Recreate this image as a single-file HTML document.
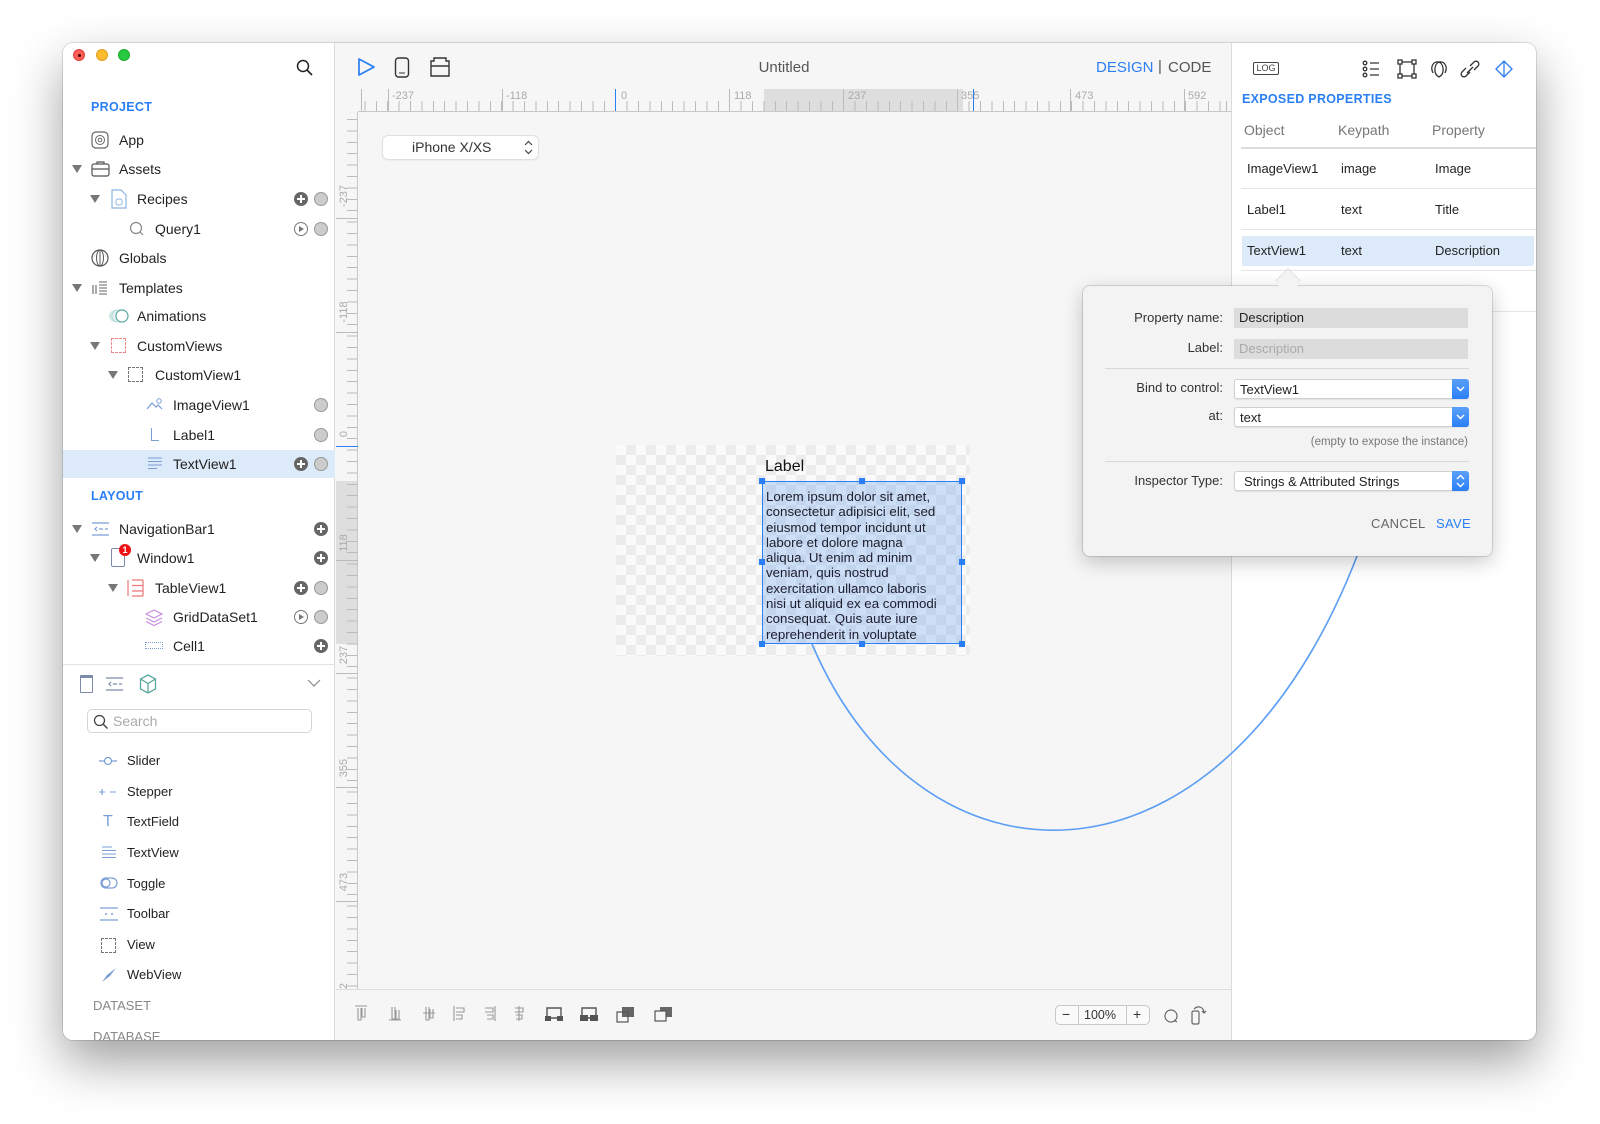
<!DOCTYPE html>
<html><head><meta charset="utf-8"><style>
*{margin:0;padding:0;box-sizing:border-box}
body{width:1600px;height:1124px;background:#fff;font-family:"Liberation Sans",sans-serif;position:relative;overflow:hidden;color:#222}
.win{position:absolute;left:63px;top:43px;width:1473px;height:997px;border-radius:10px;overflow:hidden;box-shadow:0 22px 50px rgba(0,0,0,.38),0 0 0 1px rgba(0,0,0,.12);background:#f6f6f6}
.in{position:absolute;left:-63px;top:-43px;width:1600px;height:1124px}
.a{position:absolute}
.t{position:absolute;font-size:14px;line-height:18px;white-space:nowrap;color:#222}
.sec{position:absolute;font-size:12.5px;font-weight:bold;color:#2a7ff6;letter-spacing:.3px}
.tri{position:absolute;width:0;height:0;border-left:5px solid transparent;border-right:5px solid transparent;border-top:8px solid #777}
.plus{position:absolute;width:14px;height:14px;border-radius:50%;background:#666}
.plus:before{content:"";position:absolute;left:3px;top:6px;width:8px;height:2px;background:#fff}
.plus:after{content:"";position:absolute;left:6px;top:3px;width:2px;height:8px;background:#fff}
.circ{position:absolute;width:14px;height:14px;border-radius:50%;background:#ccc;border:1.5px solid #999}
.play{position:absolute;width:14px;height:14px;border-radius:50%;border:1.3px solid #777}
.play:after{content:"";position:absolute;left:4px;top:2.5px;border-left:5px solid #777;border-top:3.5px solid transparent;border-bottom:3.5px solid transparent}
.w{position:absolute;font-size:13px;line-height:16px;color:#222}
.rl{position:absolute;font-size:11px;color:#aaa}
.mt{position:absolute;width:1px;background:#bbb}
.fl{position:absolute;font-size:13px;color:#333;text-align:right;width:140px}
.fld{position:absolute;height:20px;font-size:13px;line-height:20px;padding-left:5px}
.sel{background:#fff;border:1px solid #d0d0d0;border-radius:3px;box-shadow:0 1px 1px rgba(0,0,0,.08)}
.sb{position:absolute;right:-1px;top:-1px;width:17px;height:20px;background:linear-gradient(#5aa0fa,#2a7ff6);border-radius:0 3px 3px 0}
</style></head><body>
<div class="win"><div class="in">

<!-- sidebar -->
<div class="a" style="left:63px;top:43px;width:272px;height:997px;background:#fff;border-right:1px solid #dcdcdc"></div>
<div class="a" style="left:73px;top:49px;width:12px;height:12px;border-radius:50%;background:#fe5f57;border:1px solid #e0443e"></div>
<div class="a" style="left:78px;top:54px;width:3px;height:3px;border-radius:50%;background:#4d0000"></div>
<div class="a" style="left:96px;top:49px;width:12px;height:12px;border-radius:50%;background:#febc2e;border:1px solid #dea123"></div>
<div class="a" style="left:118px;top:49px;width:12px;height:12px;border-radius:50%;background:#28c840;border:1px solid #1aab29"></div>
<svg class="a" style="left:296px;top:59px" width="18" height="18"><circle cx="7" cy="7" r="5.5" fill="none" stroke="#222" stroke-width="1.5"/><line x1="11" y1="11" x2="16" y2="16" stroke="#222" stroke-width="1.6"/></svg>

<div class="sec" style="left:91px;top:100px">PROJECT</div>
<svg class="a" style="left:91px;top:131px" width="18" height="18"><rect x="1" y="1" width="16" height="16" rx="4" fill="none" stroke="#666" stroke-width="1.2"/><circle cx="9" cy="9" r="4.5" fill="none" stroke="#666"/><circle cx="9" cy="9" r="1.8" fill="none" stroke="#666"/></svg>
<div class="t" style="left:119px;top:131px">App</div>

<div class="tri" style="left:72px;top:165px"></div>
<svg class="a" style="left:91px;top:160px" width="19" height="18"><rect x="1" y="4" width="17" height="12" rx="2" fill="none" stroke="#555" stroke-width="1.2"/><path d="M6 4V2h7v2M1 9h17" fill="none" stroke="#555" stroke-width="1.2"/></svg>
<div class="t" style="left:119px;top:160px">Assets</div>

<div class="tri" style="left:90px;top:195px"></div>
<svg class="a" style="left:111px;top:189px" width="16" height="20"><path d="M1 1h9l5 5v13H1z" fill="none" stroke="#8db4e0" stroke-width="1.2"/><rect x="5" y="10" width="6" height="6" rx="2" fill="none" stroke="#8db4e0"/></svg>
<div class="t" style="left:137px;top:190px">Recipes</div>
<div class="plus" style="left:294px;top:192px"></div><div class="circ" style="left:314px;top:192px"></div>

<svg class="a" style="left:129px;top:221px" width="16" height="16"><circle cx="7" cy="7" r="5.5" fill="none" stroke="#888" stroke-width="1.2"/><line x1="11" y1="11" x2="14" y2="14" stroke="#888" stroke-width="1.2"/></svg>
<div class="t" style="left:155px;top:220px">Query1</div>
<div class="play" style="left:294px;top:222px"></div><div class="circ" style="left:314px;top:222px"></div>

<svg class="a" style="left:91px;top:249px" width="18" height="18"><circle cx="9" cy="9" r="8" fill="none" stroke="#555" stroke-width="1.2"/><ellipse cx="9" cy="9" rx="3.5" ry="8" fill="none" stroke="#555"/><line x1="9" y1="1" x2="9" y2="17" stroke="#555"/></svg>
<div class="t" style="left:119px;top:249px">Globals</div>

<div class="tri" style="left:72px;top:284px"></div>
<svg class="a" style="left:92px;top:281px" width="16" height="14"><path d="M1 4v9M4 4v9M7 1h8M7 4h8M7 7h8M7 10h8M7 13h8" stroke="#666" stroke-width="1.1"/></svg>
<div class="t" style="left:119px;top:279px">Templates</div>

<svg class="a" style="left:108px;top:308px" width="22" height="16"><circle cx="7" cy="8" r="6" fill="#cfe8e4"/><circle cx="10" cy="8" r="6" fill="#e2f1ef" stroke="#b5dbd5"/><circle cx="14" cy="8" r="6" fill="#fff" stroke="#5aaa9e" stroke-width="1.2"/></svg>
<div class="t" style="left:137px;top:307px">Animations</div>

<div class="tri" style="left:90px;top:342px"></div>
<div class="a" style="left:111px;top:338px;width:15px;height:15px;border:1.3px dashed #e88"></div>
<div class="t" style="left:137px;top:337px">CustomViews</div>

<div class="tri" style="left:108px;top:371px"></div>
<div class="a" style="left:128px;top:367px;width:15px;height:15px;border:1.3px dashed #777"></div>
<div class="t" style="left:155px;top:366px">CustomView1</div>

<svg class="a" style="left:146px;top:397px" width="18" height="14"><path d="M1 12l5-6 4 4 2-2 4 4" fill="none" stroke="#7a9fd6" stroke-width="1.2"/><circle cx="13" cy="4" r="2.2" fill="none" stroke="#7a9fd6"/></svg>
<div class="t" style="left:173px;top:396px">ImageView1</div>
<div class="circ" style="left:314px;top:398px"></div>

<div class="a" style="left:151px;top:428px;width:8px;height:13px;border-left:1.6px solid #7a9fd6;border-bottom:1.6px solid #7a9fd6"></div>
<div class="t" style="left:173px;top:426px">Label1</div>
<div class="circ" style="left:314px;top:428px"></div>

<div class="a" style="left:63px;top:450px;width:272px;height:28px;background:#dceaf9"></div>
<svg class="a" style="left:147px;top:457px" width="16" height="14"><path d="M1 1h14M1 4.5h14M1 8h14M1 11.5h9" stroke="#7a9fd6" stroke-width="1.1"/></svg>
<div class="t" style="left:173px;top:455px">TextView1</div>
<div class="plus" style="left:294px;top:457px"></div><div class="circ" style="left:314px;top:457px"></div>

<div class="sec" style="left:91px;top:489px">LAYOUT</div>

<div class="tri" style="left:72px;top:525px"></div>
<svg class="a" style="left:91px;top:522px" width="19" height="14"><path d="M1 1h17M1 13h17M8 7h4M14 7h3M6 5l-2 2 2 2" fill="none" stroke="#7a9fd6" stroke-width="1.2"/></svg>
<div class="t" style="left:119px;top:520px">NavigationBar1</div>
<div class="plus" style="left:314px;top:522px"></div>

<div class="tri" style="left:90px;top:554px"></div>
<div class="a" style="left:111px;top:548px;width:14px;height:19px;border:1.3px solid #7b8aa8;border-radius:2px"></div>
<div class="a" style="left:119px;top:544px;width:12px;height:12px;border-radius:50%;background:#e11;color:#fff;font-size:9px;font-weight:bold;text-align:center;line-height:12px">1</div>
<div class="t" style="left:137px;top:549px">Window1</div>
<div class="plus" style="left:314px;top:551px"></div>

<div class="tri" style="left:108px;top:584px"></div>
<svg class="a" style="left:127px;top:579px" width="17" height="18"><path d="M1 1v16M16 1v16M5 1h11M5 6.5h11M5 12h11M5 17h11" fill="none" stroke="#e77" stroke-width="1.2"/></svg>
<div class="t" style="left:155px;top:579px">TableView1</div>
<div class="plus" style="left:294px;top:581px"></div><div class="circ" style="left:314px;top:581px"></div>

<svg class="a" style="left:145px;top:609px" width="18" height="17"><path d="M9 1l8 4-8 4-8-4z M1 9l8 4 8-4 M1 12.5l8 4 8-4" fill="none" stroke="#c98be0" stroke-width="1.2"/></svg>
<div class="t" style="left:173px;top:608px">GridDataSet1</div>
<div class="play" style="left:294px;top:610px"></div><div class="circ" style="left:314px;top:610px"></div>

<div class="a" style="left:145px;top:642px;width:18px;height:7px;border:1.2px dotted #7a9fd6"></div>
<div class="t" style="left:173px;top:637px">Cell1</div>
<div class="plus" style="left:314px;top:639px"></div>

<div class="a" style="left:63px;top:664px;width:272px;height:1px;background:#e2e2e2"></div>
<div class="a" style="left:80px;top:675px;width:13px;height:18px;border:1.3px solid #7b8aa8;border-radius:1px;border-top-width:3px"></div>
<svg class="a" style="left:105px;top:677px" width="19" height="14"><path d="M1 1h17M1 13h17M8 7h4M14 7h3M6 5l-2 2 2 2" fill="none" stroke="#7b8aa8" stroke-width="1.2"/></svg>
<svg class="a" style="left:139px;top:674px" width="18" height="20"><path d="M9 1l7.5 4v10L9 19 1.5 15V5z M1.5 5L9 9.5l7.5-4.5 M9 9.5V19" fill="none" stroke="#5aaa9e" stroke-width="1.3"/></svg>
<svg class="a" style="left:307px;top:678px" width="14" height="10"><path d="M1 2l6 6 6-6" fill="none" stroke="#888" stroke-width="1.2"/></svg>

<div class="a" style="left:87px;top:709px;width:225px;height:24px;border:1px solid #d5d5d5;border-radius:5px;background:#fff"></div>
<svg class="a" style="left:93px;top:714px" width="16" height="16"><circle cx="6.5" cy="6.5" r="5" fill="none" stroke="#444" stroke-width="1.3"/><line x1="10" y1="10" x2="14.5" y2="14.5" stroke="#444" stroke-width="1.4"/></svg>
<div class="t" style="left:113px;top:712px;color:#aaa;font-size:14px">Search</div>

<svg class="a" style="left:98px;top:755px" width="20" height="12"><path d="M1 6h5M14 6h5" stroke="#7a9fd6" stroke-width="1.2"/><circle cx="10" cy="6" r="3.5" fill="none" stroke="#7a9fd6" stroke-width="1.2"/></svg>
<div class="w" style="left:127px;top:753px">Slider</div>
<svg class="a" style="left:98px;top:786px" width="20" height="12"><path d="M1 6h6M4 3v6M12 6h6" stroke="#7a9fd6" stroke-width="1.1"/></svg>
<div class="w" style="left:127px;top:784px">Stepper</div>
<div class="a" style="left:103px;top:813px;font-size:16px;color:#7a9fd6">T</div>
<div class="w" style="left:127px;top:814px">TextField</div>
<svg class="a" style="left:101px;top:846px" width="16" height="14"><path d="M1 1h10M1 4.5h14M1 8h14M1 11.5h14" stroke="#7a9fd6" stroke-width="1.1"/></svg>
<div class="w" style="left:127px;top:845px">TextView</div>
<svg class="a" style="left:100px;top:877px" width="18" height="12"><rect x="1" y="1" width="16" height="10" rx="5" fill="none" stroke="#7a9fd6" stroke-width="1.2"/><circle cx="6" cy="6" r="4" fill="none" stroke="#7a9fd6" stroke-width="1.2"/></svg>
<div class="w" style="left:127px;top:876px">Toggle</div>
<svg class="a" style="left:99px;top:907px" width="20" height="14"><path d="M1 1h18M1 13h18" stroke="#7a9fd6" stroke-width="1.2"/><circle cx="7" cy="7" r="1" fill="#7a9fd6"/><circle cx="13" cy="7" r="1" fill="#7a9fd6"/></svg>
<div class="w" style="left:127px;top:906px">Toolbar</div>
<div class="a" style="left:101px;top:938px;width:15px;height:15px;border:1.2px dashed #777"></div>
<div class="w" style="left:127px;top:937px">View</div>
<svg class="a" style="left:101px;top:967px" width="16" height="16"><path d="M15 1L6 8 1 15 9 9z" fill="#7a9fd6"/></svg>
<div class="w" style="left:127px;top:967px">WebView</div>
<div class="w" style="left:93px;top:998px;color:#888">DATASET</div>
<div class="w" style="left:93px;top:1029px;color:#888">DATABASE</div>

<!-- center toolbar -->
<div class="a" style="left:336px;top:43px;width:895px;height:46px;background:#f6f6f6"></div>
<svg class="a" style="left:356px;top:57px" width="20" height="20"><path d="M3 2l15 8-15 8z" fill="none" stroke="#2a7ff6" stroke-width="1.7" stroke-linejoin="round"/></svg>
<svg class="a" style="left:394px;top:57px" width="16" height="21"><rect x="1.5" y="1" width="13" height="19" rx="3" fill="none" stroke="#333" stroke-width="1.4"/><line x1="5" y1="16" x2="11" y2="16" stroke="#333"/></svg>
<svg class="a" style="left:429px;top:57px" width="22" height="20"><path d="M2 4h3V1h12v3h3v15H2z M2 9h18" fill="none" stroke="#333" stroke-width="1.4"/></svg>
<div class="a" style="left:740px;top:59px;width:88px;text-align:center;font-size:15px;color:#555">Untitled</div>
<div class="a" style="left:1096px;top:59px;font-size:15px;color:#2a7ff6">DESIGN</div>
<div class="a" style="left:1158px;top:58px;font-size:15px;color:#555">|</div>
<div class="a" style="left:1168px;top:59px;font-size:15px;color:#555">CODE</div>

<!-- horizontal ruler -->
<div class="a" style="left:358px;top:89px;width:873px;height:23px;background:#f6f6f6;border-bottom:1px solid #c8c8c8"></div>
<div class="a" style="left:764px;top:89px;width:199px;height:22px;background:#dedede"></div>
<div class="a" style="left:358px;top:101px;width:873px;height:10px;background:repeating-linear-gradient(to right,#bbb 0 1px,transparent 1px 11.4px);background-position:-5px 0"></div>
<div class="mt" style="left:361px;top:89px;height:22px"></div>
<div class="mt" style="left:388px;top:89px;height:22px"></div><div class="rl" style="left:392px;top:90px">-237</div>
<div class="mt" style="left:502px;top:89px;height:22px"></div><div class="rl" style="left:506px;top:90px">-118</div>
<div class="mt" style="left:615px;top:89px;height:22px;background:#2a7ff6"></div><div class="rl" style="left:621px;top:90px">0</div>
<div class="mt" style="left:729px;top:89px;height:22px"></div><div class="rl" style="left:734px;top:90px">118</div>
<div class="mt" style="left:843px;top:89px;height:22px"></div><div class="rl" style="left:848px;top:90px">237</div>
<div class="mt" style="left:957px;top:89px;height:22px"></div><div class="rl" style="left:961px;top:90px">355</div>
<div class="mt" style="left:973px;top:89px;height:22px;background:#2a7ff6"></div>
<div class="mt" style="left:1070px;top:89px;height:22px"></div><div class="rl" style="left:1075px;top:90px">473</div>
<div class="mt" style="left:1184px;top:89px;height:22px"></div><div class="rl" style="left:1188px;top:90px">592</div>

<!-- vertical ruler -->
<div class="a" style="left:336px;top:112px;width:22px;height:877px;background:#f6f6f6;border-right:1px solid #c8c8c8"></div>
<div class="a" style="left:336px;top:481px;width:21px;height:163px;background:#dedede"></div>
<div class="a" style="left:347px;top:112px;width:10px;height:877px;background:repeating-linear-gradient(to bottom,#bbb 0 1px,transparent 1px 11.4px);background-position:0 7px"></div>
<div class="a" style="left:336px;top:218px;width:22px;height:1px;background:#bbb"></div>
<div class="a" style="left:336px;top:332px;width:22px;height:1px;background:#bbb"></div>
<div class="a" style="left:336px;top:446px;width:22px;height:1px;background:#2a7ff6"></div>
<div class="a" style="left:336px;top:560px;width:22px;height:1px;background:#bbb"></div>
<div class="a" style="left:336px;top:673px;width:22px;height:1px;background:#bbb"></div>
<div class="a" style="left:336px;top:787px;width:22px;height:1px;background:#bbb"></div>
<div class="a" style="left:336px;top:901px;width:22px;height:1px;background:#bbb"></div>
<div class="rl" style="left:329px;top:190px;transform:rotate(-90deg);width:30px;text-align:center">-237</div>
<div class="rl" style="left:329px;top:306px;transform:rotate(-90deg);width:30px;text-align:center">-118</div>
<div class="rl" style="left:329px;top:428px;transform:rotate(-90deg);width:30px;text-align:center">0</div>
<div class="rl" style="left:329px;top:537px;transform:rotate(-90deg);width:30px;text-align:center">118</div>
<div class="rl" style="left:329px;top:649px;transform:rotate(-90deg);width:30px;text-align:center">237</div>
<div class="rl" style="left:329px;top:762px;transform:rotate(-90deg);width:30px;text-align:center">355</div>
<div class="rl" style="left:329px;top:876px;transform:rotate(-90deg);width:30px;text-align:center">473</div>
<div class="rl" style="left:329px;top:980px;transform:rotate(-90deg);width:30px;text-align:center">2</div>

<!-- device popup -->
<div class="a" style="left:383px;top:136px;width:155px;height:23px;background:#fff;border-radius:5px;box-shadow:0 0 0 1px #e0e0e0,0 1px 2px rgba(0,0,0,.1)"></div>
<div class="a" style="left:412px;top:139px;font-size:14px;color:#333">iPhone X/XS</div>
<svg class="a" style="left:524px;top:140px" width="9" height="15"><path d="M1 5l3.5-3.5L8 5M1 10l3.5 3.5L8 10" fill="none" stroke="#444" stroke-width="1.2"/></svg>

<!-- canvas -->
<div class="a" style="left:616px;top:445px;width:354px;height:211px;background-color:#fafafa;background-image:conic-gradient(#ececec 25%,transparent 0 50%,#ececec 0 75%,transparent 0);background-size:20px 20px"></div>
<div class="a" style="left:765px;top:458px;font-size:16px;color:#111">Label</div>
<div class="a" style="left:762px;top:481px;width:200px;height:163px;background:rgba(90,150,240,.28);border:1.5px solid #2a7ff6"></div>
<div class="a" style="left:766px;top:489px;font-size:13.3px;line-height:15.3px;color:#1d1d2d;white-space:nowrap">Lorem ipsum dolor sit amet,<br>consectetur adipisici elit, sed<br>eiusmod tempor incidunt ut<br>labore et dolore magna<br>aliqua. Ut enim ad minim<br>veniam, quis nostrud<br>exercitation ullamco laboris<br>nisi ut aliquid ex ea commodi<br>consequat. Quis aute iure<br>reprehenderit in voluptate</div>
<div class="a" style="left:759px;top:478px;width:6px;height:6px;background:#2a7ff6"></div>
<div class="a" style="left:859px;top:478px;width:6px;height:6px;background:#2a7ff6"></div>
<div class="a" style="left:959px;top:478px;width:6px;height:6px;background:#2a7ff6"></div>
<div class="a" style="left:759px;top:559px;width:6px;height:6px;background:#2a7ff6"></div>
<div class="a" style="left:959px;top:559px;width:6px;height:6px;background:#2a7ff6"></div>
<div class="a" style="left:759px;top:641px;width:6px;height:6px;background:#2a7ff6"></div>
<div class="a" style="left:859px;top:641px;width:6px;height:6px;background:#2a7ff6"></div>
<div class="a" style="left:959px;top:641px;width:6px;height:6px;background:#2a7ff6"></div>

<!-- bottom bar -->
<div class="a" style="left:336px;top:989px;width:895px;height:51px;background:#f6f6f6;border-top:1px solid #ddd"></div>
<svg class="a" style="left:352px;top:1004px" width="340" height="20" fill="none" stroke="#999" stroke-width="1.1">
<path d="M3 2h12M6 4v12h3V4M10 4v9h3V4"/>
<path d="M37 16h12M40 3v12h3V3M44 6v9h3V6"/>
<path d="M71 9h12M74 3v13h3V3M78 5v9h3V5"/>
<path d="M102 2v15M104 4h8v4h-8M104 11h6v4h-6"/>
<path d="M143 2v15M133 4h8v4h-8M135 11h6v4h-6"/>
<path d="M167 2v15M163 4h8v4h-8M164 11h6v4h-6"/>
<path d="M195 4h14v10h-14z" stroke="#555" stroke-width="1.4"/>
<rect x="193" y="12" width="6" height="5" fill="#555" stroke="none"/><rect x="205" y="12" width="6" height="5" fill="#555" stroke="none"/>
<path d="M230 4h14v10h-14z" stroke="#555" stroke-width="1.4"/>
<rect x="228" y="11" width="8" height="6" fill="#555" stroke="none"/><rect x="238" y="11" width="8" height="6" fill="#555" stroke="none"/>
<rect x="270" y="3" width="12" height="10" fill="#666" stroke="none"/><rect x="265" y="8" width="11" height="10" stroke="#555" stroke-width="1.2"/>
<rect x="308" y="3" width="12" height="10" fill="#666" stroke="none"/><rect x="303" y="7" width="11" height="10" stroke="#555" stroke-width="1.2" fill="#f6f6f6"/>
</svg>
<div class="a" style="left:1055px;top:1005px;width:95px;height:20px;border:1px solid #c8c8c8;border-radius:5px;background:#fafafa"></div>
<div class="a" style="left:1078px;top:1005px;width:1px;height:20px;background:#c8c8c8"></div>
<div class="a" style="left:1126px;top:1005px;width:1px;height:20px;background:#c8c8c8"></div>
<div class="a" style="left:1062px;top:1006px;font-size:14px;color:#333">−</div>
<div class="a" style="left:1084px;top:1008px;font-size:12.5px;color:#333">100%</div>
<div class="a" style="left:1133px;top:1006px;font-size:14px;color:#333">+</div>
<svg class="a" style="left:1162px;top:1005px" width="50" height="22" fill="none" stroke="#666" stroke-width="1.2"><circle cx="9" cy="11" r="6"/><path d="M12 15l3 2"/><rect x="30" y="6" width="7" height="13" rx="1.5"/><path d="M32 4c4-4 10-2 10 4M40 6l2 2 2-2"/></svg>

<!-- right panel -->
<div class="a" style="left:1231px;top:43px;width:305px;height:997px;background:#fff;border-left:1px solid #dcdcdc"></div>
<div class="a" style="left:1253px;top:62px;width:26px;height:13px;border:1.3px solid #444;border-radius:2px;font-size:9px;line-height:11px;text-align:center;color:#444">LOG</div>
<svg class="a" style="left:1362px;top:59px" width="170" height="20" fill="none" stroke="#333" stroke-width="1.3">
<circle cx="3" cy="4" r="1.8"/><circle cx="3" cy="10" r="1.8"/><circle cx="3" cy="16" r="1.8"/><path d="M8 4h9M8 10h9M8 16h9"/>
<rect x="38" y="3" width="14" height="14"/><rect x="36" y="1" width="4" height="4" fill="#fff"/><rect x="50" y="1" width="4" height="4" fill="#fff"/><rect x="36" y="15" width="4" height="4" fill="#fff"/><rect x="50" y="15" width="4" height="4" fill="#fff"/>
<path d="M77 3c-5 2-6 12 0 15c6-3 5-13 0-15z M77 3c-6-1-9 5-6 11 M77 3c6-1 9 5 6 11"/>
<path d="M104 9l-4 4a2.5 2.5 0 0 0 4 4l4-4M112 11l4-4a2.5 2.5 0 0 0-4-4l-4 4M105 14l6-6"/>
<path d="M142 2v16M134 10l8-8 8 8-8 8z" stroke="#2a7ff6"/>
</svg>
<div class="sec" style="left:1242px;top:92px;font-size:12.5px">EXPOSED PROPERTIES</div>
<div class="a" style="left:1244px;top:122px;font-size:14px;color:#777">Object</div>
<div class="a" style="left:1338px;top:122px;font-size:14px;color:#777">Keypath</div>
<div class="a" style="left:1432px;top:122px;font-size:14px;color:#777">Property</div>
<div class="a" style="left:1241px;top:147px;width:295px;height:2px;background:#ddd"></div>
<div class="a" style="left:1247px;top:161px;font-size:13px">ImageView1</div><div class="a" style="left:1341px;top:161px;font-size:13px">image</div><div class="a" style="left:1435px;top:161px;font-size:13px">Image</div>
<div class="a" style="left:1241px;top:188px;width:295px;height:1px;background:#e5e5e5"></div>
<div class="a" style="left:1247px;top:202px;font-size:13px">Label1</div><div class="a" style="left:1341px;top:202px;font-size:13px">text</div><div class="a" style="left:1435px;top:202px;font-size:13px">Title</div>
<div class="a" style="left:1241px;top:229px;width:295px;height:1px;background:#e5e5e5"></div>
<div class="a" style="left:1242px;top:236px;width:292px;height:30px;background:#dceaf9;border-radius:2px"></div>
<div class="a" style="left:1247px;top:243px;font-size:13px">TextView1</div><div class="a" style="left:1341px;top:243px;font-size:13px">text</div><div class="a" style="left:1435px;top:243px;font-size:13px">Description</div>
<div class="a" style="left:1241px;top:270px;width:295px;height:1px;background:#e5e5e5"></div>
<div class="a" style="left:1241px;top:311px;width:295px;height:1px;background:#e5e5e5"></div>

<!-- curve -->
<svg class="a" style="left:0;top:0" width="1600" height="1124"><path d="M812 644C925 910 1240 910 1370 520" fill="none" stroke="#5b9ef5" stroke-width="1.6"/></svg>

<!-- popover -->
<div class="a" style="left:1083px;top:286px;width:409px;height:270px;background:#f3f3f3;border-radius:7px;box-shadow:0 0 0 1px rgba(0,0,0,.12),0 6px 20px rgba(0,0,0,.22)"></div>
<div class="a" style="left:1279px;top:273px;width:18px;height:18px;background:#f3f3f3;transform:rotate(45deg);box-shadow:-1px -1px 0 rgba(0,0,0,.1)"></div>
<div class="fl" style="left:1083px;top:310px">Property name:</div>
<div class="fld" style="left:1234px;top:308px;width:234px;background:#dcdcdc;color:#222">Description</div>
<div class="fl" style="left:1083px;top:340px">Label:</div>
<div class="fld" style="left:1234px;top:339px;width:234px;background:#dcdcdc;color:#aaa">Description</div>
<div class="a" style="left:1105px;top:368px;width:364px;height:1px;background:#d8d8d8"></div>
<div class="fl" style="left:1083px;top:380px">Bind to control:</div>
<div class="fld sel" style="left:1234px;top:379px;width:235px">TextView1<div class="sb"><svg width="17" height="20"><path d="M5 8l3.5 3.5L12 8" fill="none" stroke="#fff" stroke-width="1.5"/></svg></div></div>
<div class="fl" style="left:1083px;top:408px">at:</div>
<div class="fld sel" style="left:1234px;top:407px;width:235px">text<div class="sb"><svg width="17" height="20"><path d="M5 8l3.5 3.5L12 8" fill="none" stroke="#fff" stroke-width="1.5"/></svg></div></div>
<div class="a" style="left:1268px;top:436px;width:200px;text-align:right;font-size:11.5px;color:#777">(empty to expose the instance)</div>
<div class="a" style="left:1105px;top:461px;width:364px;height:1px;background:#d8d8d8"></div>
<div class="fl" style="left:1083px;top:473px">Inspector Type:</div>
<div class="fld sel" style="left:1234px;top:471px;width:235px;padding-left:9px">Strings &amp; Attributed Strings<div class="sb"><svg width="17" height="20"><path d="M5 8l3.5-3.5L12 8M5 12l3.5 3.5L12 12" fill="none" stroke="#fff" stroke-width="1.4"/></svg></div></div>
<div class="a" style="left:1371px;top:516px;font-size:13px;color:#666;letter-spacing:.3px">CANCEL</div>
<div class="a" style="left:1436px;top:516px;font-size:13px;color:#2a7ff6;letter-spacing:.3px">SAVE</div>

</div></div>
</body></html>
